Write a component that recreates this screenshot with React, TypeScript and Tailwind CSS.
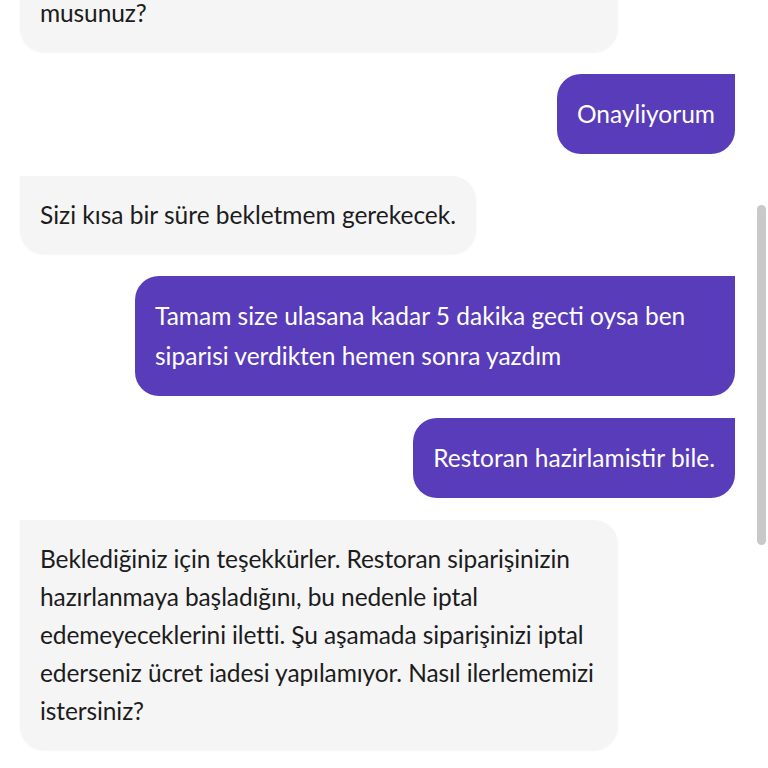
type Message = {
  from: "agent" | "user";
  text: React.ReactNode;
  nowrap?: boolean;
};

const messages: Message[] = [
  {
    from: "agent",
    nowrap: true,
    text: (
      <>
        Siparişinizin iptal edilmesi için talebinizi onaylıyor
        <br />
        musunuz?
      </>
    ),
  },
  { from: "user", text: "Onayliyorum" },
  { from: "agent", text: "Sizi kısa bir süre bekletmem gerekecek." },
  {
    from: "user",
    text: "Tamam size ulasana kadar 5 dakika gecti oysa ben siparisi verdikten hemen sonra yazdım",
  },
  { from: "user", text: "Restoran hazirlamistir bile." },
  {
    from: "agent",
    nowrap: true,
    text: (
      <>
        Beklediğiniz için teşekkürler. Restoran siparişinizin
        <br />
        hazırlanmaya başladığını, bu nedenle iptal
        <br />
        edemeyeceklerini iletti. Şu aşamada siparişinizi iptal
        <br />
        ederseniz ücret iadesi yapılamıyor. Nasıl ilerlememizi
        <br />
        istersiniz?
      </>
    ),
  },
];

const Bubble = ({ from, text, nowrap }: Message) => {
  if (from === "user") {
    return (
      <div className="flex justify-end">
        <div className="max-w-[600px] rounded-3xl rounded-tr-none bg-[#583cba] px-5 py-5 text-[24.5px] leading-10 text-white">
          {text}
        </div>
      </div>
    );
  }
  return (
    <div className="flex justify-start">
      <div
        className={
          nowrap
            ? "w-[598px] whitespace-nowrap rounded-3xl rounded-tl-none bg-[#f5f5f5] px-5 py-5 text-[24.5px] leading-[38px] tracking-[-0.1px] text-[#1c1c1c] shadow-[0_1px_2px_rgba(0,0,0,0.04)]"
            : "max-w-[598px] rounded-3xl rounded-tl-none bg-[#f5f5f5] px-5 py-5 text-[24.5px] leading-[38px] text-[#1c1c1c] shadow-[0_1px_2px_rgba(0,0,0,0.04)]"
        }
      >
        {text}
      </div>
    </div>
  );
};

export default function App() {
  return (
    <div
      className="relative h-[768px] w-[768px] overflow-hidden bg-white"
      style={{ fontFamily: '"Lato", "Noto Sans", sans-serif' }}
    >
      <div className="-mt-[64px] flex flex-col gap-[22px] pl-5 pr-[33px]">
        {messages.map((m, i) => (
          <Bubble key={i} {...m} />
        ))}
      </div>
      <div className="absolute right-[2px] top-[205px] h-[340px] w-[9px] rounded-full bg-[#c9c9c9]" />
    </div>
  );
}
